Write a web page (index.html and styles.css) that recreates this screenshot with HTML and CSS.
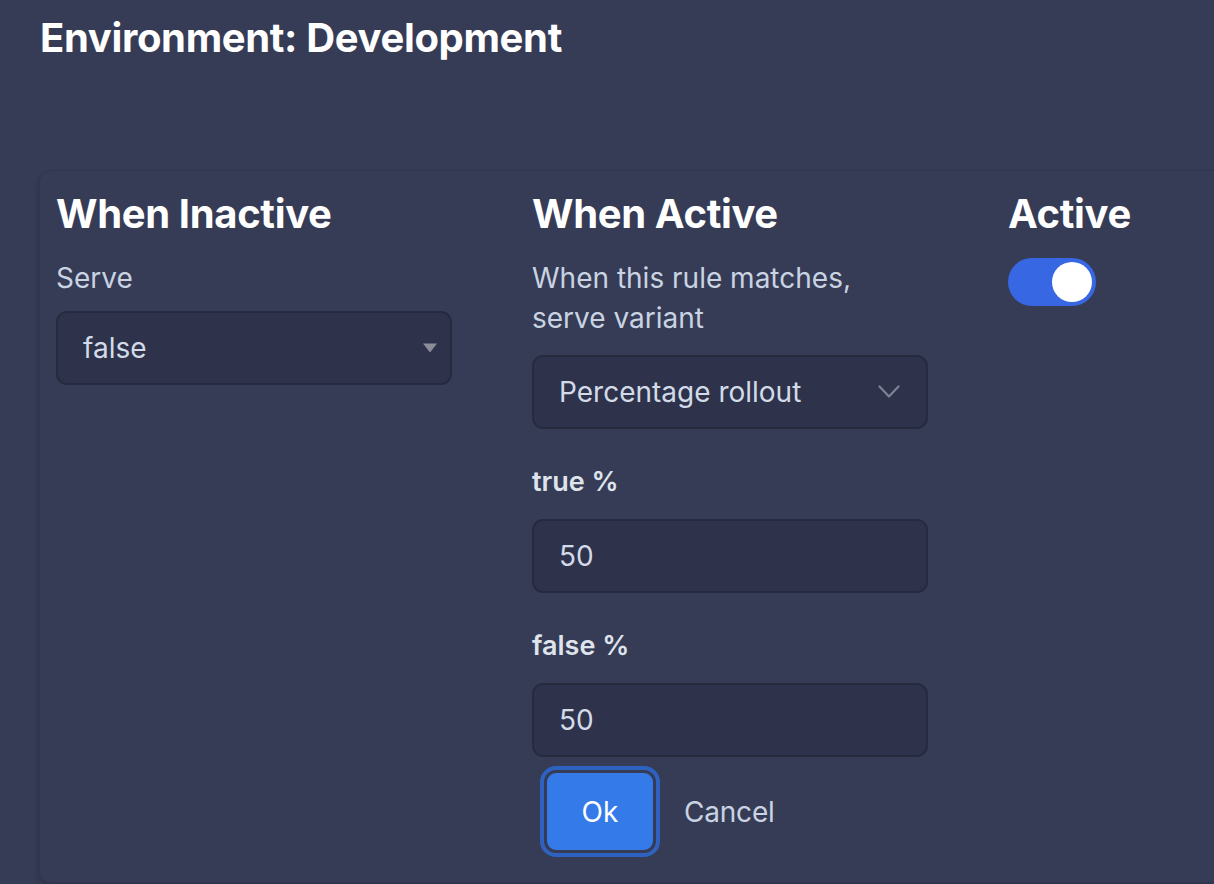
FILE: index.html
```html
<!DOCTYPE html>
<html>
<head>
<meta charset="utf-8">
<link rel="stylesheet" href="styles.css">
</head>
<body>
<h1 class="title">Environment: Development</h1>
<div class="card">
  <div class="col">
    <h2 class="heading">When Inactive</h2>
    <div class="label">Serve</div>
    <div class="select select-native">
      <span>false</span>
      <svg class="tri" width="16" height="10" viewBox="0 0 16 10"><path d="M1 0.5 L15 0.5 L8 9.5 Z" fill="#8b8e98"/></svg>
    </div>
  </div>
  <div class="col">
    <h2 class="heading">When Active</h2>
    <div class="label">When this rule matches, serve variant</div>
    <div class="select select-custom">
      <span>Percentage rollout</span>
      <svg class="chev" width="22" height="14" viewBox="0 0 22 14"><path d="M1.5 1.5 L11 11.5 L20.5 1.5" fill="none" stroke="#7c8293" stroke-width="2.2" stroke-linecap="round" stroke-linejoin="round"/></svg>
    </div>
    <div class="field-label">true %</div>
    <div class="input">50</div>
    <div class="field-label">false %</div>
    <div class="input">50</div>
    <div class="actions">
      <button class="ok">Ok</button>
      <button class="cancel">Cancel</button>
    </div>
  </div>
  <div class="col">
    <h2 class="heading">Active</h2>
    <div class="toggle"><div class="knob"></div></div>
  </div>
</div>
</body>
</html>
```
FILE: styles.css
```css
html, body {
  margin: 0;
  padding: 0;
  background: #363c56;
  font-family: Inter, "Noto Sans", sans-serif;
  color: #fff;
  height: 100%;
  overflow: hidden;
}
body {
  padding-left: 40px;
}
.title {
  margin: 0;
  padding-top: 12px;
  font-size: 40px;
  font-weight: 700;
  line-height: 52px;
  letter-spacing: -0.35px;
}
.card {
  margin-top: 106px;
  margin-left: -1px;
  display: grid;
  grid-template-columns: 396px 396px 200px;
  column-gap: 80px;
  padding: 17px 17px 0 16px;
  height: 694px;
  border: 1px solid #31364f;
  border-right: none;
  border-radius: 12px 0 0 12px;
  box-shadow: -2px 3px 4px rgba(0,0,0,0.12);
}
.col {
  display: flex;
  flex-direction: column;
  align-items: flex-start;
}
.heading {
  margin: 0;
  font-size: 40px;
  font-weight: 700;
  line-height: 52px;
  letter-spacing: -0.35px;
}
.label {
  margin-top: 18px;
  font-size: 28px;
  line-height: 40px;
  color: #c9d3e2;
}
.select, .input {
  box-sizing: border-box;
  width: 396px;
  height: 74px;
  margin-top: 13px;
  background: #2e334b;
  border: 2px solid #262b40;
  border-radius: 11px;
  display: flex;
  align-items: center;
  justify-content: space-between;
  padding: 0 24px 0 25px;
  font-size: 28px;
  color: #d3dbe8;
}
.select-native { padding-right: 12px; }
.select-custom { margin-top: 17px; padding-right: 26px; }
.field-label {
  margin-top: 35px;
  font-size: 27px;
  font-weight: 600;
  line-height: 36px;
  color: #dfe4ec;
}
.input { margin-top: 19px; }
.actions {
  margin-top: 9px;
  display: flex;
  align-items: center;
  gap: 24px;
  padding-left: 8px;
}
.ok {
  width: 120px;
  height: 91px;
  box-sizing: border-box;
  background: #347ae9;
  border: 7px solid #363c56;
  outline: 4px solid #2e62c0;
  outline-offset: -4px;
  border-radius: 16px;
  color: #fff;
  font-family: inherit;
  font-size: 28px;
  font-weight: 400;
  padding: 0;
}
.cancel {
  background: none;
  border: none;
  color: #c9d3e2;
  font-family: inherit;
  font-size: 28px;
  letter-spacing: -0.2px;
  padding: 0;
}
.toggle {
  margin-top: 18px;
  width: 88px;
  height: 48px;
  border-radius: 24px;
  background: #3767e3;
  display: flex;
  align-items: center;
  justify-content: flex-end;
  padding: 0 4px;
  box-sizing: border-box;
}
.knob {
  width: 40px;
  height: 40px;
  border-radius: 50%;
  background: #fff;
}
```
